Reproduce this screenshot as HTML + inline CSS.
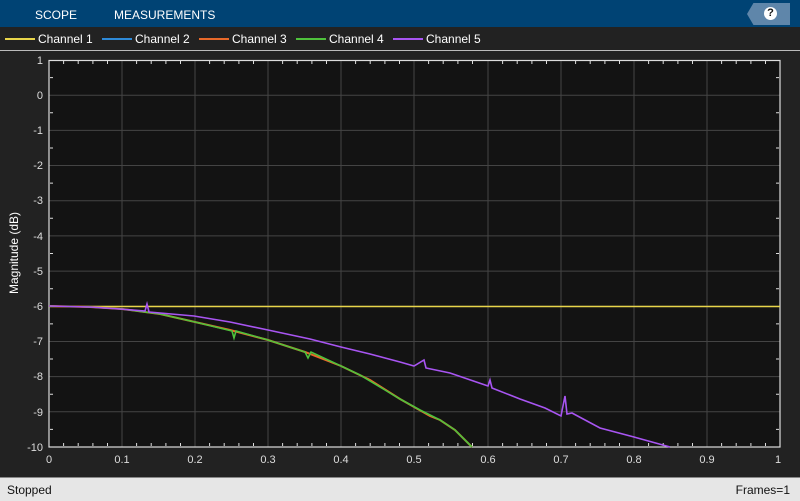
<!DOCTYPE html>
<html><head><meta charset="utf-8"><style>
body{margin:0;width:800px;height:500px;overflow:hidden;background:#222;font-family:"Liberation Sans",sans-serif}
.top{position:absolute;left:0;top:0;width:800px;height:27px;background:#004374;color:#fff;font-size:12px}
.top span{position:absolute;top:8px}
.leg{position:absolute;top:27px;left:0;width:800px;height:23px;background:#222;border-bottom:1px solid #bbb;color:#fff;font-size:12px}
.leg div{position:absolute;top:5px}
.leg i{display:inline-block;width:30px;height:2px;vertical-align:middle;margin-right:3px;margin-top:-2px}
.status{position:absolute;left:0;top:477px;width:800px;height:23px;background:#e6e6e6;border-top:1px solid #888;font-size:12px;color:#111}
</style></head><body>
<div class="top"><span style="left:35px">SCOPE</span><span style="left:114px">MEASUREMENTS</span>
<div style="position:absolute;left:747px;top:3px;width:43px;height:22px;background:#5f86aa;clip-path:polygon(0 50%,15% 0,100% 0,100% 100%,15% 100%)"></div>
<div style="position:absolute;left:764px;top:7px;width:13px;height:13px;border-radius:50%;background:#fff;color:#111;font-size:11px;font-weight:bold;text-align:center;line-height:13px">?</div></div>
<div class="leg">
<div style="left:5px"><i style="background:#e8d54a"></i>Channel 1</div>
<div style="left:102px"><i style="background:#2e8ad8"></i>Channel 2</div>
<div style="left:199px"><i style="background:#e8692a"></i>Channel 3</div>
<div style="left:296px"><i style="background:#4fc23c"></i>Channel 4</div>
<div style="left:393px"><i style="background:#a855f2"></i>Channel 5</div>
</div>
<svg style="position:absolute;left:0;top:0" width="800" height="500">
<rect x="49" y="60" width="731" height="387" fill="#131313"/>
<g stroke="#444" stroke-width="1">
<path d="M122 60V447M195 60V447M268 60V447M341 60V447M414 60V447M488 60V447M561 60V447M634 60V447M707 60V447"/>
<path d="M49 95.2H780M49 130.4H780M49 165.5H780M49 200.7H780M49 235.9H780M49 271.1H780M49 306.3H780M49 341.5H780M49 376.6H780M49 411.8H780"/>
</g>
<g stroke="#ddd" stroke-width="1">
<path d="M63.6 61v3M78.2 61v3M92.9 61v3M107.5 61v3M136.6 61v3M151.2 61v3M165.9 61v3M180.5 61v3M209.6 61v3M224.2 61v3M238.9 61v3M253.5 61v3M282.6 61v3M297.2 61v3M311.9 61v3M326.5 61v3M355.6 61v3M370.2 61v3M384.9 61v3M399.5 61v3M428.6 61v3M443.2 61v3M457.9 61v3M472.5 61v3M502.6 61v3M517.2 61v3M531.9 61v3M546.5 61v3M575.6 61v3M590.2 61v3M604.9 61v3M619.5 61v3M648.6 61v3M663.2 61v3M677.9 61v3M692.5 61v3M721.6 61v3M736.2 61v3M750.9 61v3M765.5 61v3"/>
<path d="M63.6 446v-3M78.2 446v-3M92.9 446v-3M107.5 446v-3M136.6 446v-3M151.2 446v-3M165.9 446v-3M180.5 446v-3M209.6 446v-3M224.2 446v-3M238.9 446v-3M253.5 446v-3M282.6 446v-3M297.2 446v-3M311.9 446v-3M326.5 446v-3M355.6 446v-3M370.2 446v-3M384.9 446v-3M399.5 446v-3M428.6 446v-3M443.2 446v-3M457.9 446v-3M472.5 446v-3M502.6 446v-3M517.2 446v-3M531.9 446v-3M546.5 446v-3M575.6 446v-3M590.2 446v-3M604.9 446v-3M619.5 446v-3M648.6 446v-3M663.2 446v-3M677.9 446v-3M692.5 446v-3M721.6 446v-3M736.2 446v-3M750.9 446v-3M765.5 446v-3"/>
<path d="M50 77.6h3M50 112.8h3M50 148h3M50 183.1h3M50 218.3h3M50 253.5h3M50 288.7h3M50 323.9h3M50 359h3M50 394.2h3M50 429.4h3M779 77.6h-3M779 112.8h-3M779 148h-3M779 183.1h-3M779 218.3h-3M779 253.5h-3M779 288.7h-3M779 323.9h-3M779 359h-3M779 394.2h-3M779 429.4h-3"/>
</g>
<rect x="49" y="60.5" width="731" height="386.5" fill="none" stroke="#ddd" stroke-width="1.2"/>
<g fill="#ddd" font-size="11" text-anchor="end">
<text x="43" y="64">1</text><text x="43" y="99">0</text><text x="43" y="134">-1</text><text x="43" y="169">-2</text><text x="43" y="204">-3</text><text x="43" y="240">-4</text><text x="43" y="275">-5</text><text x="43" y="310">-6</text><text x="43" y="345">-7</text><text x="43" y="380">-8</text><text x="43" y="416">-9</text><text x="43" y="451">-10</text>
</g>
<g fill="#ddd" font-size="11" text-anchor="middle">
<text x="49" y="463">0</text><text x="122" y="463">0.1</text><text x="195" y="463">0.2</text><text x="268" y="463">0.3</text><text x="341" y="463">0.4</text><text x="414" y="463">0.5</text><text x="488" y="463">0.6</text><text x="561" y="463">0.7</text><text x="634" y="463">0.8</text><text x="707" y="463">0.9</text><text x="778" y="463">1</text>
</g>
<text transform="translate(18 253) rotate(-90)" fill="#fff" font-size="12" text-anchor="middle">Magnitude (dB)</text>
<path d="M49 306.5H780" stroke="#e8d54a" stroke-width="1.6"/>
<path d="M49 306 L90 307 L122 309 L160 314 L195 322 L230 330 L268 340 L305 352 L341 366 L370 380 L400 399 L430 416 L440 420 L455 430 L472 447" fill="none" stroke="#e8692a" stroke-width="2"/>
<path d="M49 306 L90 307 L122 309 L160 314 L195 322 L232 331 L234 338 L236 331 L268 340 L305 352 L308 358 L311 352 L341 366 L360 375 L385 390 L400 399 L420 410 L440 420 L455 430 L472 447" fill="none" stroke="#4fc23c" stroke-width="1.6"/>
<path d="M49 306 L90 307 L120 309 L145 311 L147 304 L149 312 L194 316 L230 322 L268 330 L310 339 L341 347 L370 354 L400 362 L414 366 L424 360 L426 368 L450 373 L488 386 L490 380 L492 388 L520 399 L545 408 L561 416 L565 396 L567 414 L572 413 L600 428 L634 437 L652 442 L670 447" fill="none" stroke="#a855f2" stroke-width="1.6"/>
</svg>
<div class="status"><span style="position:absolute;left:7px;top:5px">Stopped</span><span style="position:absolute;right:10px;top:5px">Frames=1</span></div>
</body></html>
